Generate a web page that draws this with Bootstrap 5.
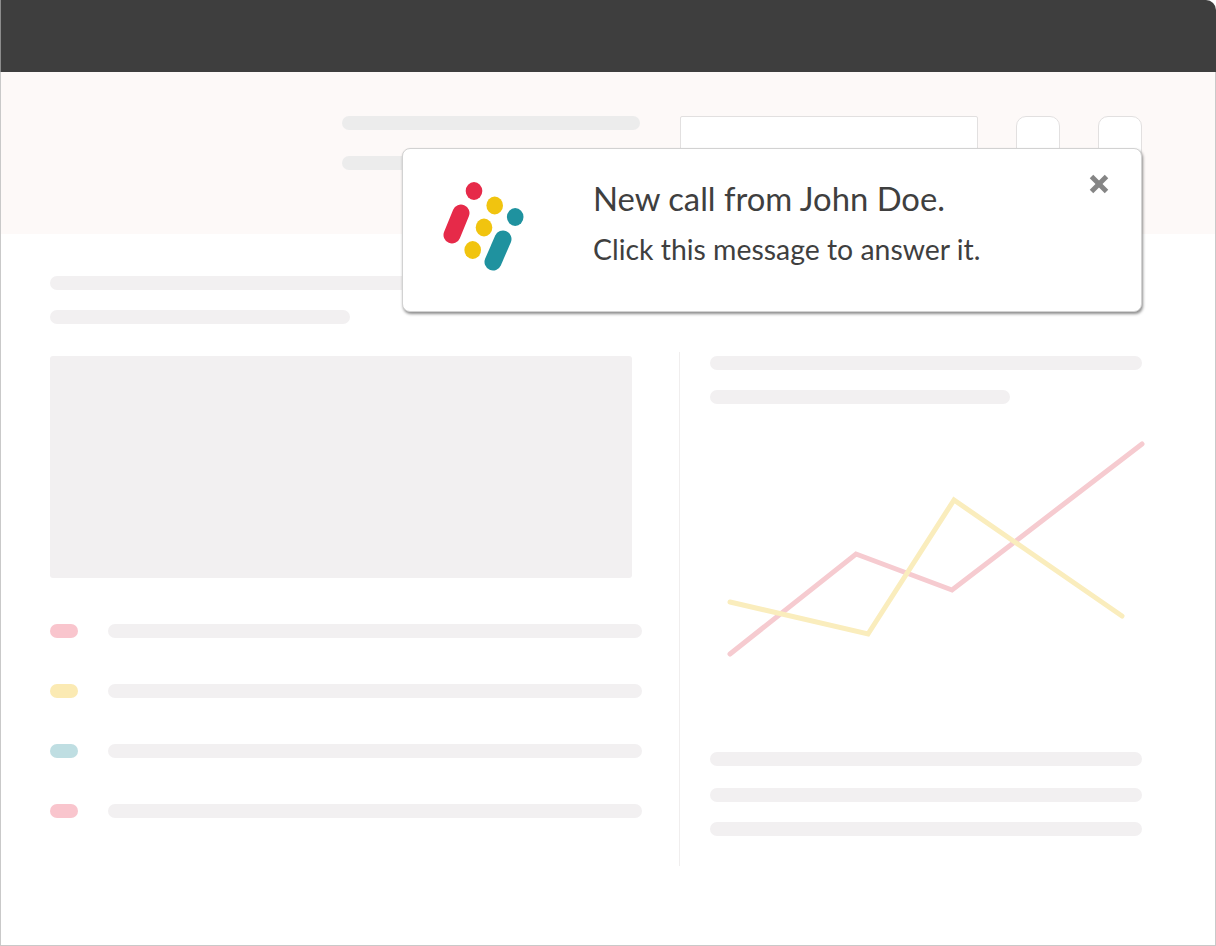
<!DOCTYPE html>
<html lang="en">
<head>
    <meta charset="UTF-8">
    <meta name="viewport" content="width=device-width, initial-scale=1.0">
    <title>New call notification</title>
    <link href="https://cdn.jsdelivr.net/npm/bootstrap@5.3.2/dist/css/bootstrap.min.css" rel="stylesheet">
    <style>
        body { background: #fff; font-family: "Lato", "Liberation Sans", sans-serif; color: #3f3f3f; }
        .app-frame { width: 1216px; height: 946px; border-radius: 0 10px 0 0; overflow: hidden; }
        .title-strip { height: 72px; background: #3e3e3e; border-left: 1px solid #8c8c8c; }
        .frame-body { height: 874px; border: solid #c9c9c9; border-width: 0 1px 1px 1px; }
        .top-band { height: 162px; padding: 44px 73px 0 341px; background: #fdf9f8; }
        .skel { height: 14px; border-radius: 7px; background: #f2f0f1; }
        .top-band .skel { background: #ececec; }
        .top-skel-col { width: 298px; margin-right: 40px; gap: 26px; }
        .fake-input { width: 298px; height: 44px; margin-right: 38px; background: #fff; border: 1px solid #e2e0e0; border-radius: 2px; }
        .fake-btn { width: 44px; height: 44px; background: #fff; border: 1px solid #e2e0e0; border-radius: 10px; }
        .main-area { padding: 42px 73px 0 49px; }
        .gap-20 { gap: 20px; }
        .w-590 { width: 590px; }
        .w-300 { width: 300px; }
        .columns-wrap { margin-top: 28px; }
        .left-col { width: 592px; padding-top: 4px; }
        .hero-block { width: 582px; height: 222px; margin-bottom: 46px; background: #f2f0f1; border-radius: 3px; }
        .legend-list { gap: 46px; }
        .legend-dot { width: 28px; height: 14px; margin-right: 30px; border-radius: 7px; }
        .dot-red { background: #f9c5cd; }
        .dot-yellow { background: #fbeab3; }
        .dot-teal { background: #bfdee2; }
        .col-rule { width: 1px; height: 514px; margin: 0 30px 0 37px; background: #f0eeee; }
        .right-col { width: 432px; padding-top: 4px; }
        .chart-box { display: block; width: 440px; height: 348px; }
        .foot-skels { gap: 22px 0; }
        .foot-skels .skel:last-child { margin-top: -2px; }
        .call-toast { position: absolute; left: 401px; top: 76px; width: 740px; height: 164px; padding: 32px 32px 0 39px; border: 1px solid #d2d2d2; border-radius: 8px; box-shadow: 1px 2px 3px rgba(0, 0, 0, .45); }
        .toast-logo { width: 84px; height: 92px; margin-right: 67px; flex-shrink: 0; }
        .toast-title { margin: -1px 0 12px; font-size: 32.8px; line-height: 38px; font-weight: 400; }
        .toast-sub { margin: 0; font-size: 28.4px; line-height: 38px; }
        .toast-close { width: 20px; height: 20px; margin-left: auto; margin-top: -7px; padding: 0; background: none; border: 0; }
    </style>
</head>
<body>
    <div class="app-frame">
        <div class="title-strip"></div>
        <div class="frame-body position-relative">
            <div class="top-band d-flex align-items-start">
                <div class="top-skel-col d-flex flex-column">
                    <div class="skel"></div>
                    <div class="skel"></div>
                </div>
                <div class="fake-input"></div>
                <div class="fake-btn"></div>
                <div class="fake-btn ms-auto"></div>
            </div>

            <div class="main-area">
                <div class="d-flex flex-column gap-20">
                    <div class="skel w-590"></div>
                    <div class="skel w-300"></div>
                </div>
                <div class="columns-wrap d-flex">
                    <div class="left-col">
                        <div class="hero-block"></div>
                        <div class="legend-list d-flex flex-column">
                            <div class="d-flex"><span class="legend-dot dot-red"></span><div class="skel flex-grow-1"></div></div>
                            <div class="d-flex"><span class="legend-dot dot-yellow"></span><div class="skel flex-grow-1"></div></div>
                            <div class="d-flex"><span class="legend-dot dot-teal"></span><div class="skel flex-grow-1"></div></div>
                            <div class="d-flex"><span class="legend-dot dot-red"></span><div class="skel flex-grow-1"></div></div>
                        </div>
                    </div>
                    <div class="col-rule"></div>
                    <div class="right-col">
                        <div class="d-flex flex-column gap-20">
                            <div class="skel"></div>
                            <div class="skel w-300"></div>
                        </div>
                        <svg class="chart-box" viewBox="710 404 440 348" fill="none" stroke-width="5" stroke-linecap="round" stroke-linejoin="miter">
                            <polyline points="730,654 856,554 952,590 1142,444" stroke="#f6cbd0"/>
                            <polyline points="730,602 868,634 954,500 1122,616" stroke="#faedbd"/>
                        </svg>
                        <div class="foot-skels d-flex flex-column">
                            <div class="skel"></div>
                            <div class="skel"></div>
                            <div class="skel"></div>
                        </div>
                    </div>
                </div>
            </div>

            <div class="call-toast card flex-row align-items-start">
                <svg class="toast-logo" viewBox="0 0 84 92">
                    <g fill="none" stroke-width="17" stroke-linecap="round">
                        <line x1="19" y1="32" x2="10" y2="54" stroke="#e62a49"/>
                        <line x1="61" y1="58" x2="51" y2="81" stroke="#1f929f"/>
                    </g>
                    <ellipse cx="32" cy="10" rx="8.3" ry="9" fill="#e62a49"/>
                    <ellipse cx="52.7" cy="24.5" rx="8.3" ry="9" fill="#f1c40f"/>
                    <ellipse cx="73.2" cy="36" rx="8.3" ry="9" fill="#1f929f"/>
                    <ellipse cx="42" cy="46.5" rx="8.3" ry="9" fill="#f1c40f"/>
                    <ellipse cx="30.7" cy="69" rx="8.3" ry="9" fill="#f1c40f"/>
                </svg>
                <div>
                    <h5 class="toast-title">New call from John Doe.</h5>
                    <p class="toast-sub">Click this message to answer it.</p>
                </div>
                <button class="toast-close" type="button" aria-label="Close">
                    <svg class="d-block" width="20" height="20" viewBox="0 0 20 20" stroke="#858585" stroke-width="5">
                        <line x1="2.5" y1="2.5" x2="17.5" y2="17.5"/>
                        <line x1="17.5" y1="2.5" x2="2.5" y2="17.5"/>
                    </svg>
                </button>
            </div>
        </div>
    </div>
    <script src="https://cdn.jsdelivr.net/npm/bootstrap@5.3.2/dist/js/bootstrap.bundle.min.js"></script>
</body>
</html>
